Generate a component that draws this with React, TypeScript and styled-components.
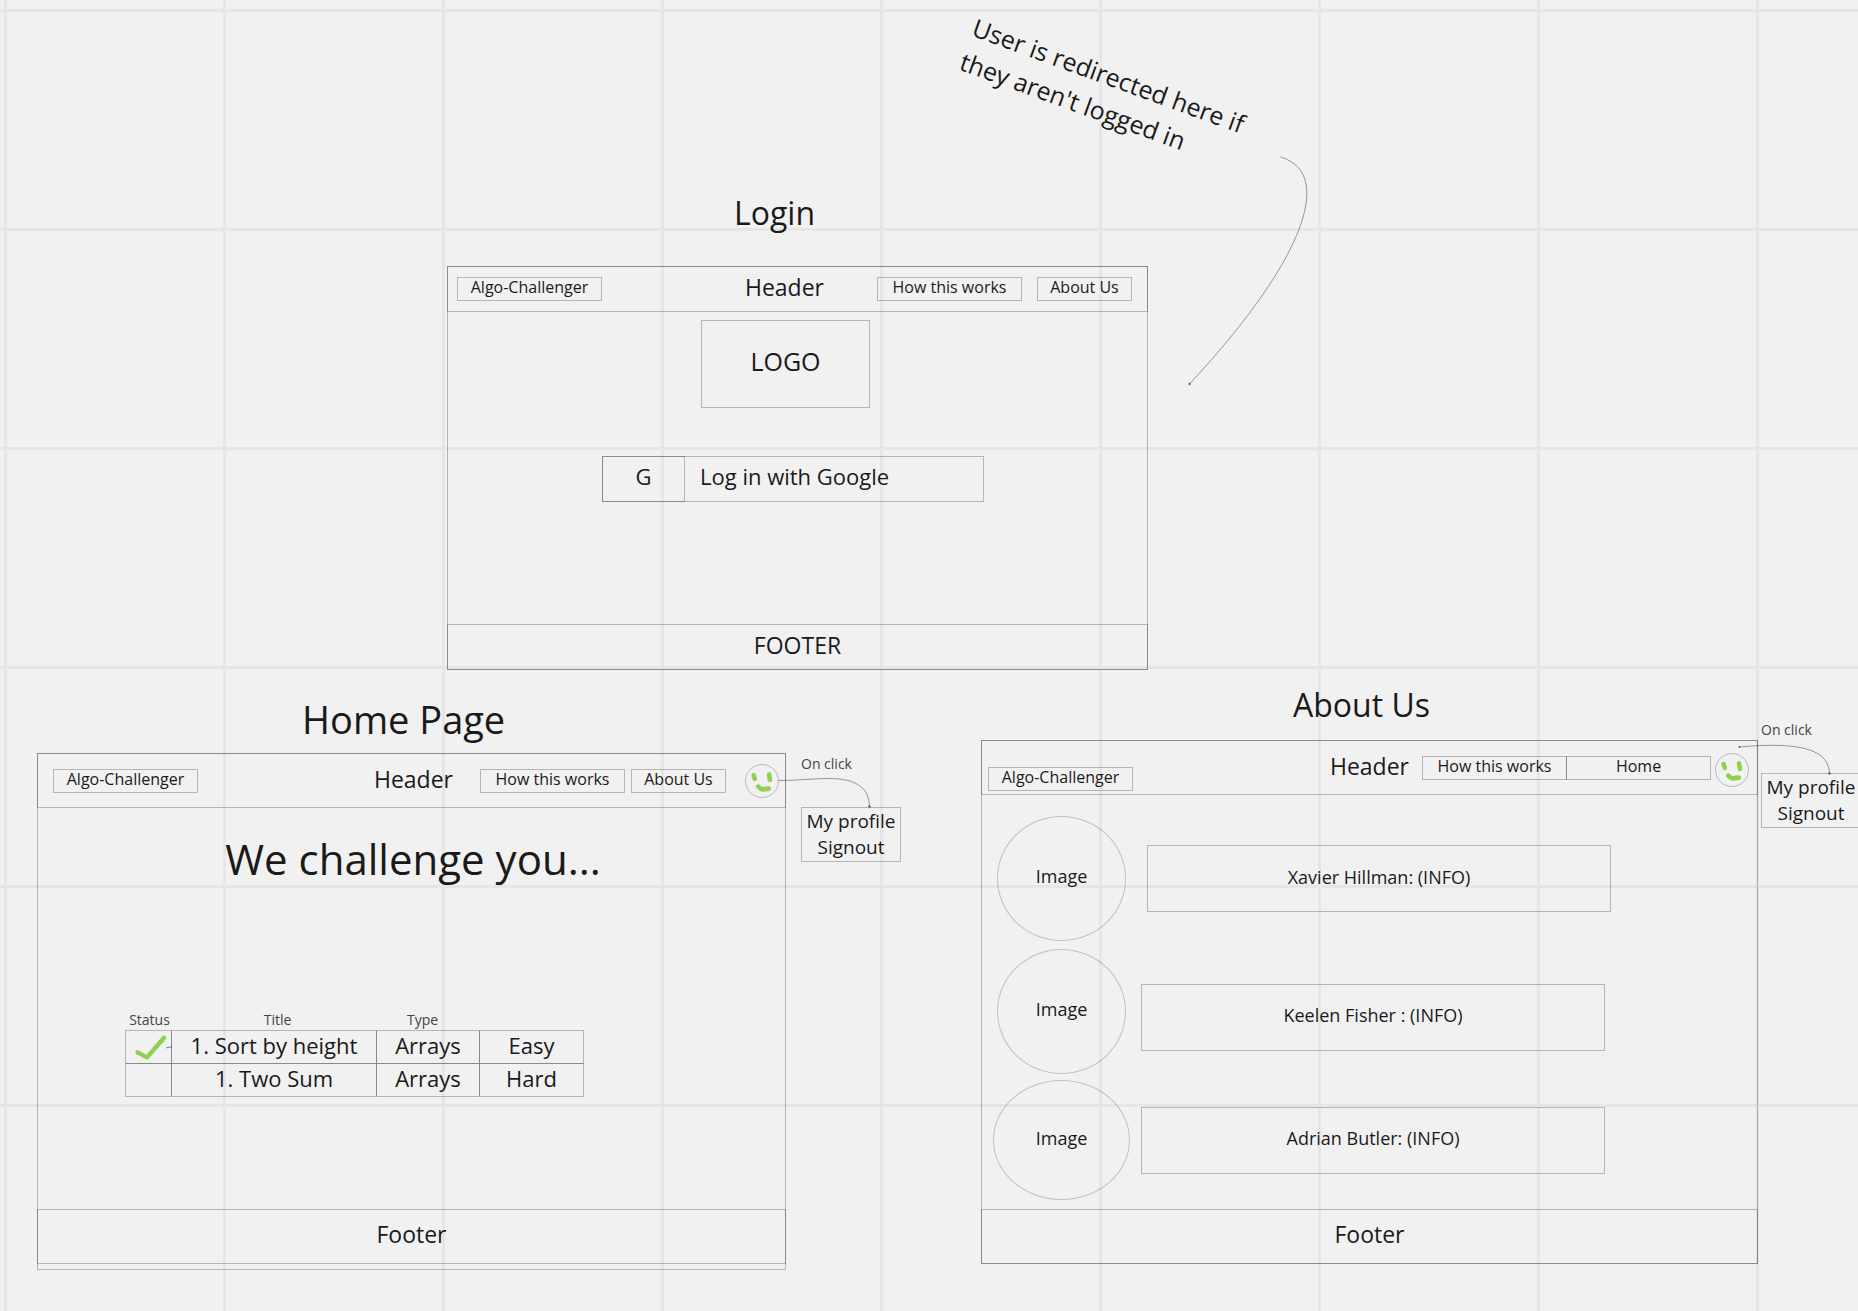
import React from "react";
import styled, { createGlobalStyle } from "styled-components";

const INK = "#1a1a1a";
const LINE = "rgba(26, 26, 26, 0.28)";
const INNER_LINE = "rgba(26, 26, 26, 0.48)";
const GREEN = "#8fd14f";

const GlobalStyle = createGlobalStyle`
  *, *::before, *::after { box-sizing: border-box; }
  body { margin: 0; background: #f1f1f1; }
  body, button {
    font-family: "Open Sans", "Noto Sans", sans-serif;
    color: ${INK};
  }
  button { background: none; cursor: pointer; }
  a { color: inherit; text-decoration: none; }
  h1, h2, h3, p { margin: 0; font-weight: 400; }
`;

type Spot = { $x: number; $y: number };

const Canvas = styled.main`
  position: relative;
  width: 100%;
  min-height: max(100vh, 1311px);
  overflow: hidden;
  background-color: #f1f1f1;
  background-image: linear-gradient(to right, #e6e6e6 3px, transparent 3px),
    linear-gradient(to bottom, #e6e6e6 3px, transparent 3px);
  background-size: 219px 219px;
  background-position: 4px 9px;
`;

const Placed = styled.div<Spot>`
  position: absolute;
  left: ${(p) => p.$x}px;
  top: ${(p) => p.$y}px;
`;

const FrameTitle = styled.h2<{ $large?: boolean }>`
  font-size: ${(p) => (p.$large ? 38 : 32)}px;
  line-height: ${(p) => (p.$large ? 52 : 44)}px;
  white-space: nowrap;
`;

const Note = styled.p`
  width: 300px;
  font-size: 25px;
  line-height: 36px;
  transform: rotate(20deg);
  transform-origin: 0 0;
`;

const Frame = styled.section<{ $w: number; $h: number; $tail?: number }>`
  display: flex;
  flex-direction: column;
  width: ${(p) => p.$w}px;
  min-height: ${(p) => p.$h}px;
  padding-bottom: ${(p) => p.$tail ?? 0}px;
  border: 1px solid ${LINE};
`;

const Header = styled.header<{ $h: number; $left: number; $right: number }>`
  display: flex;
  align-items: center;
  height: ${(p) => p.$h}px;
  margin: -1px -1px 0;
  padding: 0 ${(p) => p.$right}px 0 ${(p) => p.$left}px;
  border: 1px solid ${LINE};
`;

const HeaderLabel = styled.h3`
  margin-left: auto;
  padding-bottom: 4px;
  font-size: 23px;
  line-height: 32px;
`;

const Nav = styled.nav<{ $before: number; $gap: number }>`
  display: flex;
  align-items: center;
  margin-left: ${(p) => p.$before}px;

  & > a + a {
    margin-left: ${(p) => p.$gap}px;
  }
`;

const Chip = styled.a<{ $short?: boolean; $low?: boolean }>`
  display: flex;
  justify-content: center;
  align-items: center;
  width: ${(p) => (p.$short ? 95 : 145)}px;
  height: 24px;
  padding-bottom: 4px;
  border: 1px solid ${LINE};
  font-size: 16px;
  line-height: 22px;
  ${(p) => p.$low && "align-self: flex-end; margin-bottom: 3px;"}
`;

const Avatar = styled.button<{ $before: number; $drop?: number }>`
  display: block;
  width: 34px;
  height: 34px;
  margin: ${(p) => p.$drop ?? 0}px 0 0 ${(p) => p.$before}px;
  padding: 0;
  border: 0;

  svg { display: block; }
`;

const Footer = styled.footer<{ $h: number }>`
  display: flex;
  justify-content: center;
  align-items: center;
  height: ${(p) => p.$h}px;
  margin: auto -1px -1px;
  padding-bottom: 5px;
  border: 1px solid ${LINE};
  font-size: 23px;
  line-height: 32px;
`;

const LoginBody = styled.div`
  display: flex;
  flex-direction: column;
  padding: 8px 163px 0 154px;
`;

const Logo = styled.div`
  display: flex;
  justify-content: center;
  align-items: center;
  width: 169px;
  height: 88px;
  margin-left: 99px;
  padding-bottom: 6px;
  border: 1px solid ${LINE};
  font-size: 25px;
  line-height: 34px;
`;

const GoogleButton = styled.button`
  display: flex;
  width: 100%;
  height: 46px;
  margin-top: 48px;
  padding: 0;
  border: 1px solid ${LINE};
  font-size: 22px;
  line-height: 30px;
  text-align: left;
`;

const GoogleMark = styled.span`
  display: flex;
  justify-content: center;
  width: 83px;
  height: 46px;
  margin: -1px 0 -1px -1px;
  padding-top: 4px;
  border: 1px solid ${LINE};
`;

const GoogleText = styled.span`
  padding: 4px 0 0 15px;
`;

const HomeBody = styled.div`
  padding: 22px 87px 0;
`;

const Slogan = styled.h1`
  padding-left: 3px;
  font-size: 42px;
  line-height: 58px;
  text-align: center;
`;

const Problems = styled.table`
  width: 459px;
  margin-top: 122px;
  border-spacing: 0;
  table-layout: fixed;

  th {
    height: 20px;
    padding: 0;
    font-size: 14px;
    font-weight: 400;
    line-height: 20px;
    color: #444;
  }
  th:first-child { padding-left: 2px; }
  th:nth-child(2) { padding-left: 6px; }
  th:nth-child(3) { padding-right: 12px; }

  td {
    height: 33px;
    padding: 0 0 4px;
    border: 0 solid ${LINE};
    border-right: 1px solid ${INNER_LINE};
    border-bottom: 1px solid ${INNER_LINE};
    font-size: 22px;
    line-height: 28px;
    text-align: center;
    white-space: nowrap;
  }
  td:first-child { padding: 0; border-left: 1px solid ${LINE}; }
  td:last-child { border-right-color: ${LINE}; }
  tbody tr:first-child td { border-top: 1px solid ${LINE}; }
  tbody tr:last-child td { border-bottom-color: ${LINE}; }

  svg { display: block; margin-left: 8px; }
`;

const Team = styled.ul`
  display: flex;
  flex-direction: column;
  margin: 0;
  padding: 21px 0 0 11px;
  list-style: none;
`;

const Member = styled.li<{ $gap: number; $after: number }>`
  display: grid;
  grid-template-columns: 137px 464px;
  column-gap: ${(p) => p.$gap}px;
  align-items: center;
  margin-bottom: ${(p) => p.$after}px;
`;

const Photo = styled.div<{ $wide?: boolean }>`
  display: flex;
  justify-content: center;
  align-items: center;
  justify-self: center;
  width: ${(p) => (p.$wide ? 137 : 129)}px;
  height: ${(p) => (p.$wide ? 120 : 125)}px;
  padding-bottom: 5px;
  border: 1px solid rgba(26, 26, 26, 0.22);
  border-radius: 50%;
  font-size: 18px;
  line-height: 24px;
`;

const Info = styled.p<{ $low?: boolean }>`
  display: flex;
  justify-content: center;
  align-items: center;
  height: 67px;
  margin-top: ${(p) => (p.$low ? 11 : 0)}px;
  padding-bottom: 4px;
  border: 1px solid ${LINE};
  font-size: 18px;
  line-height: 24px;
`;

const ClickHint = styled.p`
  font-size: 14px;
  line-height: 20px;
  color: #444;
  white-space: nowrap;
`;

const Menu = styled.div`
  display: flex;
  flex-direction: column;
  align-items: center;
  width: 100px;
  margin-top: 33px;
  border: 1px solid ${LINE};
  font-size: 19px;
  line-height: 26px;
  white-space: nowrap;

  a:last-child { padding-bottom: 1px; }
`;

const Connectors = styled.svg`
  position: absolute;
  left: 0;
  top: 0;
  pointer-events: none;
`;

const Face = () => (
  <svg width="34" height="34" viewBox="0 0 34 34" fill="none" aria-hidden="true">
    <circle cx="17" cy="17" r="16.5" stroke="rgba(26,26,26,0.25)" />
    <g stroke={GREEN} strokeWidth="4.6" strokeLinecap="round" strokeLinejoin="round">
      <path d="M8.6 11.2 L9.8 14.8" />
      <path d="M24 10.4 L25 15.8" />
      <path d="M13.2 22.6 Q15.5 25 18 25.4 L23.8 24.6" />
    </g>
  </svg>
);

const Check = () => (
  <svg width="38" height="28" viewBox="0 0 38 28" fill="none" role="img" aria-label="Done">
    <path
      d="M3.5 19.4 L13 24.4 L30 4.8"
      stroke={GREEN}
      strokeWidth="4.4"
      strokeLinecap="round"
      strokeLinejoin="round"
    />
    <path d="M32 15 L34 14.4 L38 14" stroke="rgba(26,26,26,0.5)" />
  </svg>
);

const ProfileMenu = ({ x, y }: { x: number; y: number }) => (
  <Placed $x={x} $y={y}>
    <ClickHint>On click</ClickHint>
    <Menu>
      <a href="#profile">My profile</a>
      <a href="#signout">Signout</a>
    </Menu>
  </Placed>
);

const problems = [
  { done: true, title: "1. Sort by height", type: "Arrays", level: "Easy" },
  { done: false, title: "1. Two Sum", type: "Arrays", level: "Hard" },
];

export default function App() {
  return (
    <>
      <GlobalStyle />
      <Canvas>
        <Placed $x={980} $y={9}>
          <Note>User is redirected here if they aren't logged in</Note>
        </Placed>

        <Placed $x={734} $y={191}>
          <FrameTitle>Login</FrameTitle>
        </Placed>
        <Placed $x={447} $y={266}>
          <Frame $w={701} $h={404}>
            <Header $h={46} $left={9} $right={15}>
              <Chip href="#home">Algo-Challenger</Chip>
              <HeaderLabel>Header</HeaderLabel>
              <Nav $before={53} $gap={15}>
                <Chip href="#how">How this works</Chip>
                <Chip href="#about" $short>About Us</Chip>
              </Nav>
            </Header>
            <LoginBody>
              <Logo>LOGO</Logo>
              <GoogleButton type="button">
                <GoogleMark>G</GoogleMark>
                <GoogleText>Log in with Google</GoogleText>
              </GoogleButton>
            </LoginBody>
            <Footer $h={46}>FOOTER</Footer>
          </Frame>
        </Placed>

        <Placed $x={302} $y={693}>
          <FrameTitle $large>Home Page</FrameTitle>
        </Placed>
        <Placed $x={37} $y={753}>
          <Frame $w={749} $h={517} $tail={6}>
            <Header $h={55} $left={15} $right={6}>
              <Chip href="#home">Algo-Challenger</Chip>
              <HeaderLabel>Header</HeaderLabel>
              <Nav $before={27} $gap={6}>
                <Chip href="#how">How this works</Chip>
                <Chip href="#about" $short>About Us</Chip>
                <Avatar type="button" aria-label="Profile" $before={19}>
                  <Face />
                </Avatar>
              </Nav>
            </Header>
            <HomeBody>
              <Slogan>We challenge you...</Slogan>
              <Problems>
                <colgroup>
                  <col width="47" />
                  <col width="205" />
                  <col width="103" />
                  <col width="104" />
                </colgroup>
                <thead>
                  <tr>
                    <th scope="col">Status</th>
                    <th scope="col">Title</th>
                    <th scope="col">Type</th>
                    <th aria-label="Level" />
                  </tr>
                </thead>
                <tbody>
                  {problems.map((p) => (
                    <tr key={p.title}>
                      <td>{p.done && <Check />}</td>
                      <td>{p.title}</td>
                      <td>{p.type}</td>
                      <td>{p.level}</td>
                    </tr>
                  ))}
                </tbody>
              </Problems>
            </HomeBody>
            <Footer $h={55}>Footer</Footer>
          </Frame>
        </Placed>
        <ProfileMenu x={801} y={754} />

        <Placed $x={1293} $y={683}>
          <FrameTitle>About Us</FrameTitle>
        </Placed>
        <Placed $x={981} $y={740}>
          <Frame $w={777} $h={524}>
            <Header $h={55} $left={6} $right={8}>
              <Chip href="#home" $low>Algo-Challenger</Chip>
              <HeaderLabel>Header</HeaderLabel>
              <Nav $before={13} $gap={-1}>
                <Chip href="#how">How this works</Chip>
                <Chip href="#home">Home</Chip>
                <Avatar type="button" aria-label="Profile" $before={4} $drop={5}>
                  <Face />
                </Avatar>
              </Nav>
            </Header>
            <Team>
              <Member $gap={17} $after={8}>
                <Photo>Image</Photo>
                <Info>Xavier Hillman: (INFO)</Info>
              </Member>
              <Member $gap={11} $after={6}>
                <Photo>Image</Photo>
                <Info $low>Keelen Fisher : (INFO)</Info>
              </Member>
              <Member $gap={11} $after={0}>
                <Photo $wide>Image</Photo>
                <Info>Adrian Butler: (INFO)</Info>
              </Member>
            </Team>
            <Footer $h={55}>Footer</Footer>
          </Frame>
        </Placed>
        <ProfileMenu x={1761} y={720} />

        <Connectors width="1858" height="1311" fill="none" stroke="rgba(26,26,26,0.42)" aria-hidden="true">
          <path d="M1280.5 157 C1335 173 1305 260 1189.5 384" />
          <path d="M779 780.5 C798 780.5 812 778.5 830 778.5 C856 778.5 869.5 788 869.5 807" />
          <path d="M1739 747 C1785 743 1829.5 744 1829.5 774" />
          <g fill="rgba(26,26,26,0.6)" stroke="none">
            <circle cx="1189.5" cy="384" r="1.2" />
            <circle cx="869.5" cy="806.5" r="1.2" />
            <circle cx="1829.5" cy="773.5" r="1.2" />
            <circle cx="1739.5" cy="747" r="1" />
          </g>
        </Connectors>
      </Canvas>
    </>
  );
}
